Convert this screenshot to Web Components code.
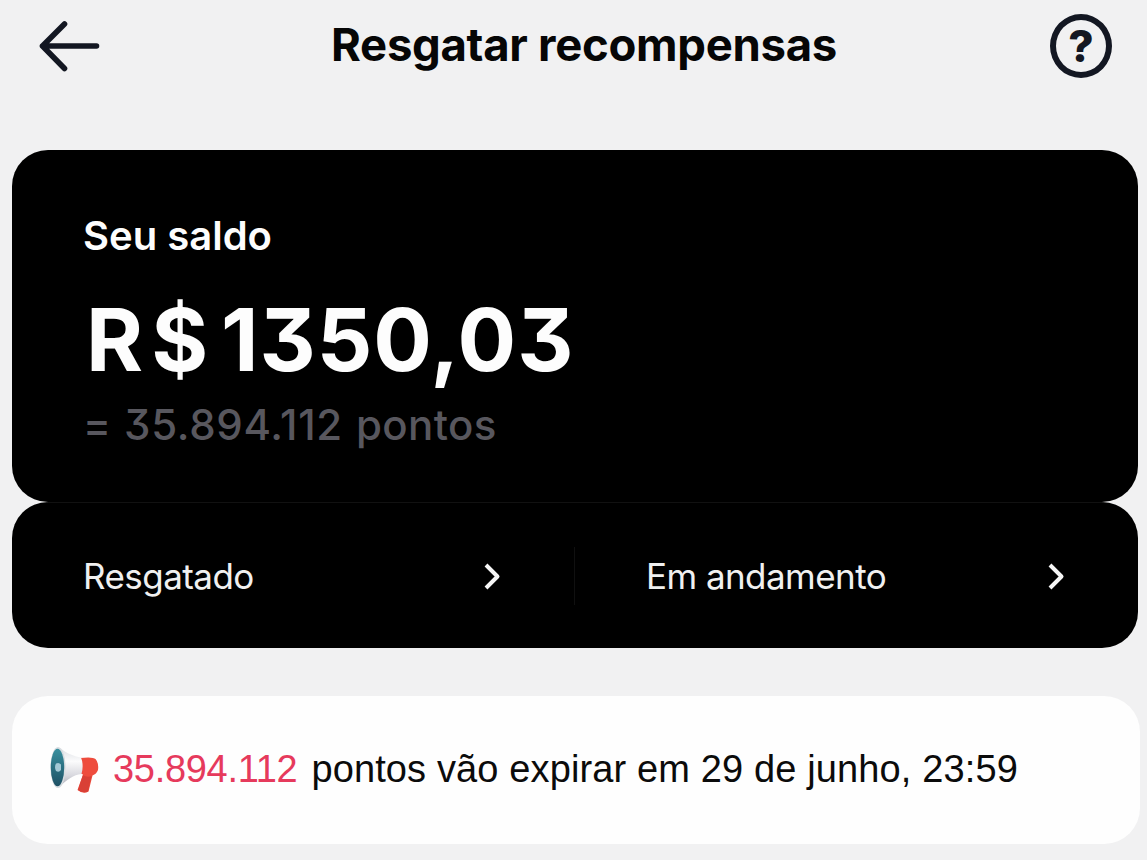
<!DOCTYPE html>
<html lang="pt-BR">
<head>
<meta charset="utf-8">
<title>Resgatar recompensas</title>
<style>
  body {
    margin: 0;
    background: #f1f1f2;
    font-family: Inter, "Liberation Sans", sans-serif;
  }
</style>
</head>
<body>
<rewards-page>
  <page-header slot="header">Resgatar recompensas</page-header>
  <balance-card currency="R$" amount="1350,03" points="35.894.112">Seu saldo</balance-card>
  <link-bar>
    <link-item>Resgatado</link-item>
    <link-item>Em andamento</link-item>
  </link-bar>
  <expiry-notice points="35.894.112">pontos vão expirar em 29 de junho, 23:59</expiry-notice>
</rewards-page>

<script>
const define = (name, html) => {
  const template = document.createElement('template');
  template.innerHTML = html;

  customElements.define(name, class extends HTMLElement {
    constructor() {
      super();
      this.attachShadow({ mode: 'open' });
      this.shadowRoot.appendChild(template.content.cloneNode(true));
      // Fill every [data-attr] placeholder with the matching host attribute.
      this.shadowRoot.querySelectorAll('[data-attr]').forEach(el => {
        el.textContent = this.getAttribute(el.dataset.attr);
      });
    }
  });
};

define('rewards-page', `
  <style>
    :host {
      display: flex;
      flex-direction: column;
      box-sizing: border-box;
      width: 1147px;
      height: 860px;
      overflow: hidden;
    }
    main {
      display: flex;
      flex-direction: column;
      padding: 0 8px 0 12px;
    }
  </style>
  <slot name="header"></slot>
  <main><slot></slot></main>
`);

define('page-header', `
  <style>
    :host {
      display: grid;
      grid-template-columns: 64px 1fr 64px;
      align-items: center;
      height: 92px;
      margin-bottom: 58px;
      padding: 0 35px 0 38px;
      color: #131722;
    }
    h1 {
      margin: 0;
      padding: 0 0 3px 18px;
      color: #060606;
      font-size: 45.5px;
      font-weight: 660;
      line-height: 60px;
      letter-spacing: -0.3px;
      text-align: center;
      white-space: nowrap;
    }
    .help {
      display: grid;
      place-items: center;
      box-sizing: border-box;
      width: 62px;
      height: 64px;
      margin-left: auto;
      border: 6px solid;
      border-radius: 50%;
      font-size: 44px;
      font-weight: 800;
      line-height: 52px;
    }
  </style>
  <svg width="64" height="54" viewBox="38 19 64 54" fill="none" stroke="currentColor" stroke-width="5.6" stroke-linecap="round" stroke-linejoin="round">
    <path d="M96.5 46H42.5M64.5 24L42.5 46L64.5 68.5"/>
  </svg>
  <h1><slot></slot></h1>
  <div class="help">?</div>
`);

define('balance-card', `
  <style>
    :host {
      display: flex;
      flex-direction: column;
      box-sizing: border-box;
      width: 1126px;
      height: 352px;
      padding: 61px 71px 0;
      border-radius: 36px;
      background: #000;
      color: #fdfdfd;
      white-space: nowrap;
    }
    .label {
      font-size: 40px;
      font-weight: 620;
      line-height: 50px;
    }
    .amount {
      display: flex;
      gap: 5px;
      margin: 29px 0 0 3px;
      font-size: 87px;
      font-weight: 700;
      line-height: 100px;
      font-feature-settings: "cv09", "calt" 0;
    }
    .currency { letter-spacing: 8px; }
    .value { letter-spacing: 0.9px; }
    .points {
      display: flex;
      gap: 13px;
      margin-top: 9px;
      color: #58575e;
      font-size: 42px;
      font-weight: 500;
      line-height: 52px;
      font-feature-settings: "cv09", "calt" 0;
    }
    .points [data-attr] { letter-spacing: 0.7px; }
    .points :last-child { letter-spacing: 0.4px; }
  </style>
  <div class="label"><slot></slot></div>
  <div class="amount">
    <span class="currency" data-attr="currency"></span>
    <span class="value" data-attr="amount"></span>
  </div>
  <div class="points"><span>=</span><span data-attr="points"></span><span>pontos</span></div>
`);

define('link-bar', `
  <style>
    :host {
      display: grid;
      grid-template-columns: 562px 1fr;
      align-items: center;
      box-sizing: border-box;
      width: 1126px;
      height: 146px;
      padding-top: 2px;
      border-radius: 36px;
      background: linear-gradient(#111, #111) center top / 1056px 1px no-repeat #000;
    }
    ::slotted(:not(:first-child)) { border-left: 1px solid #101010; }
  </style>
  <slot></slot>
`);

define('link-item', `
  <style>
    :host {
      display: flex;
      align-items: center;
      justify-content: space-between;
      box-sizing: border-box;
      height: 58px;
      padding: 0 73px 0 71px;
      color: #f0f0f0;
      font-size: 35px;
      line-height: 50px;
      letter-spacing: -0.55px;
      white-space: nowrap;
    }
  </style>
  <span><slot></slot></span>
  <svg width="17" height="28" viewBox="0 0 17 28" fill="none" stroke="#f6f6f6" stroke-width="4" stroke-linejoin="round">
    <path d="M2 3L13.5 14.500L2 26"/>
  </svg>
`);

define('expiry-notice', `
  <style>
    :host {
      display: flex;
      align-items: center;
      box-sizing: border-box;
      width: 1128px;
      height: 148px;
      margin-top: 48px;
      padding-left: 37px;
      border-radius: 36px;
      background: #fefefe;
      color: #0b0b0b;
      font-family: "Liberation Sans", sans-serif;
      font-size: 38px;
      line-height: 50px;
      white-space: nowrap;
    }
    span { padding-bottom: 3px; }
    .points {
      margin: 0 14px 0 14px;
      color: #e63a5c;
      letter-spacing: -0.3px;
    }
    .text { letter-spacing: 0.13px; }
  </style>
  <svg width="50" height="50" viewBox="0 0 50 50">
    <defs>
      <linearGradient id="horn" x1="0" y1="0" x2="0" y2="1">
        <stop offset="0" stop-color="#dcdfe3"/>
        <stop offset=".35" stop-color="#fbfbfc"/>
        <stop offset=".7" stop-color="#d9d9df"/>
        <stop offset="1" stop-color="#a9abb3"/>
      </linearGradient>
      <linearGradient id="mouth" x1="0" y1="0" x2="0" y2="1">
        <stop offset="0" stop-color="#39909f"/>
        <stop offset="1" stop-color="#1e5064"/>
      </linearGradient>
    </defs>
    <path d="M31 13Q44 11.500 46.500 14Q50 18 49 25Q47.500 29 43.500 30.500L39.500 46.500Q34 49.500 28.500 45L34 29.500L30 28Z" fill="#ee4c3d"/>
    <path d="M34 30Q38 33 42.500 31L39 46.500Q34 48.500 29 45Z" fill="#d94036"/>
    <path d="M9 2.500C14 4 18 10 32 12.500Q35 20 32.500 29C24 30 19 34 10 42Z" fill="url(#horn)"/>
    <ellipse cx="9" cy="22.500" rx="7.600" ry="20.500" fill="#d7dce0"/>
    <ellipse cx="8.500" cy="22.500" rx="6.700" ry="18.800" fill="url(#mouth)"/>
    <path d="M7 18.500Q10 17 12 19.500V25Q10 28 7 26Q5 22 7 18.500Z" fill="#a3c8d5"/>
  </svg>
  <span class="points" data-attr="points"></span>
  <span class="text"><slot></slot></span>
`);
</script>
</body>
</html>
